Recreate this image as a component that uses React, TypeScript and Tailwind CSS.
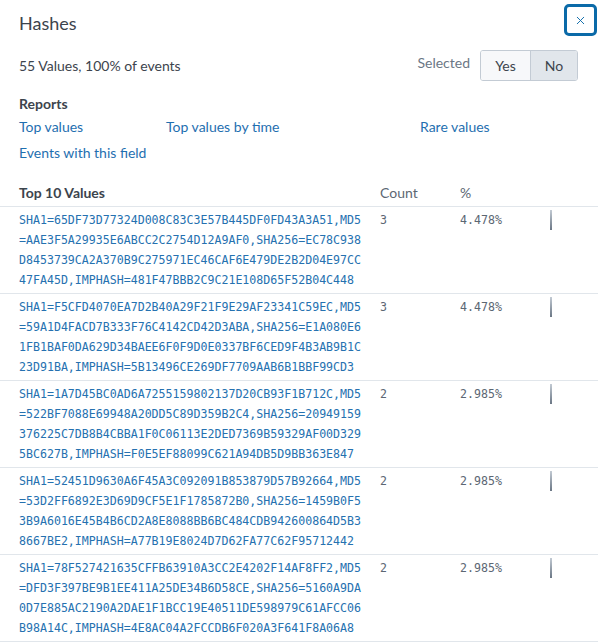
import { X } from "lucide-react";

type Row = { value: string; count: number; percent: string };

const rows: Row[] = [
  {
    value:
      "SHA1=65DF73D77324D008C83C3E57B445DF0FD43A3A51,MD5=AAE3F5A29935E6ABCC2C2754D12A9AF0,SHA256=EC78C938D8453739CA2A370B9C275971EC46CAF6E479DE2B2D04E97CC47FA45D,IMPHASH=481F47BBB2C9C21E108D65F52B04C448",
    count: 3,
    percent: "4.478%",
  },
  {
    value:
      "SHA1=F5CFD4070EA7D2B40A29F21F9E29AF23341C59EC,MD5=59A1D4FACD7B333F76C4142CD42D3ABA,SHA256=E1A080E61FB1BAF0DA629D34BAEE6F0F9D0E0337BF6CED9F4B3AB9B1C23D91BA,IMPHASH=5B13496CE269DF7709AAB6B1BBF99CD3",
    count: 3,
    percent: "4.478%",
  },
  {
    value:
      "SHA1=1A7D45BC0AD6A7255159802137D20CB93F1B712C,MD5=522BF7088E69948A20DD5C89D359B2C4,SHA256=20949159376225C7DB8B4CBBA1F0C06113E2DED7369B59329AF00D3295BC627B,IMPHASH=F0E5EF88099C621A94DB5D9BB363E847",
    count: 2,
    percent: "2.985%",
  },
  {
    value:
      "SHA1=52451D9630A6F45A3C092091B853879D57B92664,MD5=53D2FF6892E3D69D9CF5E1F1785872B0,SHA256=1459B0F53B9A6016E45B4B6CD2A8E8088BB6BC484CDB942600864D5B38667BE2,IMPHASH=A77B19E8024D7D62FA77C62F95712442",
    count: 2,
    percent: "2.985%",
  },
  {
    value:
      "SHA1=78F527421635CFFB63910A3CC2E4202F14AF8FF2,MD5=DFD3F397BE9B1EE411A25DE34B6D58CE,SHA256=5160A9DA0D7E885AC2190A2DAE1F1BCC19E40511DE598979C61AFCC06B98A14C,IMPHASH=4E8AC04A2FCCDB6F020A3F641F8A06A8",
    count: 2,
    percent: "2.985%",
  },
];

// the value column wraps at 49 characters
function chunk(s: string, n = 49) {
  const out: string[] = [];
  for (let i = 0; i < s.length; i += n) out.push(s.slice(i, i + n));
  return out;
}

export default function App() {
  return (
    <div className="w-[598px] h-[643px] overflow-hidden bg-white font-['Lato',sans-serif] text-[#3c444d]">
      <div className="flex items-start justify-between pl-[19px] pr-[1px] pt-[4px]">
        <h1 className="mt-[7px] text-[18px] leading-[24px]">Hashes</h1>
        <button className="flex h-[32px] w-[33px] items-center justify-center rounded-[5px] border-[3px] border-[#0b6aa8] text-[#0b6aa8]">
          <X className="h-[13px] w-[13px]" strokeWidth={1.75} />
        </button>
      </div>

      <div className="mt-[14px] flex items-center justify-between pl-[19px] pr-[20px]">
        <span className="text-[14px] leading-[18px]">55 Values, 100% of events</span>
        <div className="flex items-center gap-[10px]">
          <span className="mb-[6px] text-[14px] leading-[18px] text-[#6b7785]">Selected</span>
          <div className="flex h-[31px] overflow-hidden rounded-[3px] border border-[#c3cbd4] text-[14px]">
            <button className="w-[50px] border-r border-[#c3cbd4] bg-[#f7f8fa] text-[#3c444d]">Yes</button>
            <button className="w-[46px] bg-[#e1e6eb] text-[#3c444d]">No</button>
          </div>
        </div>
      </div>

      <div className="mt-[14px] pl-[19px] text-[14px] font-bold leading-[18px]">Reports</div>
      <div className="mt-[5px] grid grid-cols-[147px_254px_auto] gap-y-[8px] pl-[19px] text-[14px] leading-[18px] text-[#1f6fb0]">
        <a>Top values</a>
        <a>Top values by time</a>
        <a>Rare values</a>
        <a>Events with this field</a>
      </div>

      <div className="mt-[22px] grid grid-cols-[361px_80px_90px_auto] border-b border-[#e1e6eb] pb-[4px] pl-[19px] text-[14px] leading-[18px]">
        <span className="font-bold">Top 10 Values</span>
        <span className="text-[#5c6773]">Count</span>
        <span className="text-[#5c6773]">%</span>
        <span />
      </div>

      {rows.map((r, i) => (
        <div
          key={i}
          className="grid grid-cols-[361px_80px_90px_auto] border-b border-[#e1e6eb] py-[3px] pl-[19px] font-['DejaVu_Sans_Mono',monospace] text-[11.6px] leading-[20px]"
        >
          <div className="text-[#2571b0]">
            {chunk(r.value).map((line, j) => (
              <div key={j}>{line}</div>
            ))}
          </div>
          <span className="text-[#5c6773]">{r.count}</span>
          <span className="text-[#5c6773]">{r.percent}</span>
          <div className="h-[20px] w-[2px] bg-gradient-to-b from-[#c3cbd4] to-[#6b7785]" />
        </div>
      ))}
    </div>
  );
}
